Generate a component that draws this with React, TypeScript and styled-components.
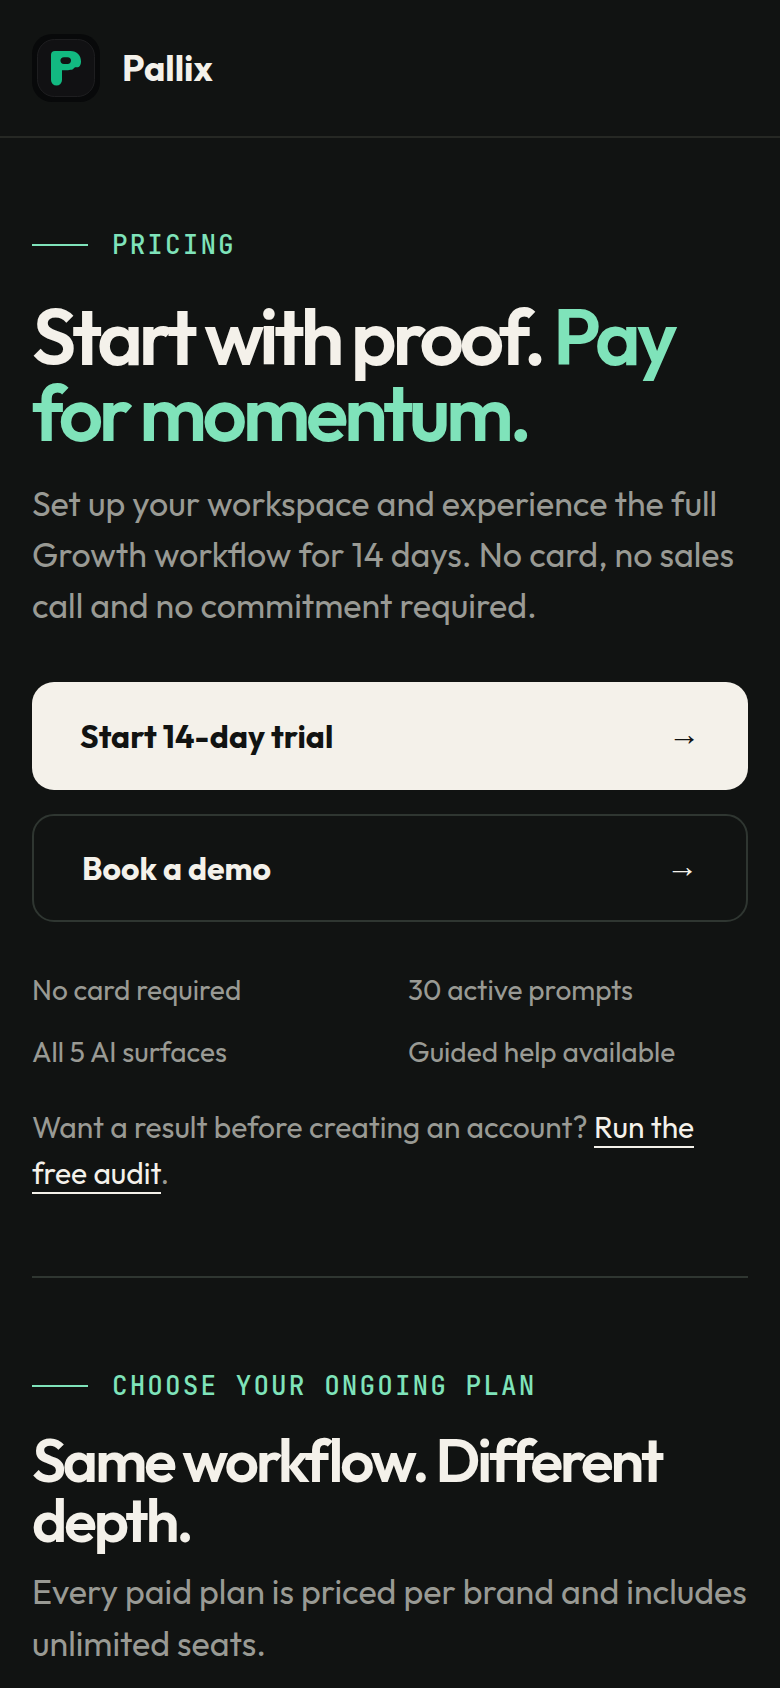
import React from 'react';
import styled, { createGlobalStyle, css } from 'styled-components';

const color = {
  page: '#111312',
  cream: '#f4f1ea',
  mint: '#7fe3ba',
  muted: '#999a94',
  line: '#2f3631',
  headerLine: '#262824',
};

const sans = `Outfit, Lato, "Liberation Sans", sans-serif`;
const mono = `"JetBrains Mono", "DejaVu Sans Mono", monospace`;

const GlobalStyle = createGlobalStyle`
  *, *::before, *::after { box-sizing: border-box; }
  body {
    margin: 0;
    background: ${color.page};
    color: ${color.cream};
    font-family: ${sans};
  }
  h1, h2, p, ul { margin: 0; padding: 0; }
  ul { list-style: none; }
`;

const Header = styled.header`
  display: flex;
  padding: 34px 32px;
  border-bottom: 2px solid ${color.headerLine};
`;

const Brand = styled.a`
  display: flex;
  align-items: center;
  gap: 22px;
  color: inherit;
  text-decoration: none;
  font-size: 36px;
  line-height: 46px;
  font-weight: 700;
`;

const Main = styled.main`
  padding: 0 32px;
`;

const Hero = styled.section`
  padding: 90px 0 80px;
  border-bottom: 2px solid ${color.line};
`;

const Plans = styled.section`
  padding: 91px 0 48px;
`;

const Eyebrow = styled.p`
  display: flex;
  align-items: center;
  gap: 24px;
  color: ${color.mint};
  font-family: ${mono};
  font-size: 26px;
  line-height: 34px;
  font-weight: 500;
  letter-spacing: 0.08em;
  text-transform: uppercase;

  &::before {
    content: '';
    width: 56px;
    height: 2px;
    background: currentColor;
  }
`;

const Title = styled.h1`
  margin-top: 36px;
  font-size: 78px;
  line-height: 76px;
  font-weight: 600;
  letter-spacing: -0.055em;
`;

const Accent = styled.span`
  color: ${color.mint};
`;

const Subtitle = styled.h2`
  margin-top: 27px;
  font-size: 60px;
  line-height: 60px;
  font-weight: 600;
  letter-spacing: -3px;
`;

const Lede = styled.p<{ $gap: number; $leading: number }>`
  margin-top: ${(p) => p.$gap}px;
  color: ${color.muted};
  font-size: 34px;
  line-height: ${(p) => p.$leading}px;
`;

const Actions = styled.div`
  display: grid;
  gap: 24px;
  margin-top: 51px;
`;

const Action = styled.a<{ $primary?: boolean }>`
  display: flex;
  align-items: center;
  justify-content: space-between;
  min-height: 108px;
  padding: 0 48px;
  border-radius: 22px;
  font-size: 32px;
  line-height: 40px;
  font-weight: 700;
  text-decoration: none;
  ${(p) =>
    p.$primary
      ? css`
          background: ${color.cream};
          color: ${color.page};
        `
      : css`
          border: 2px solid ${color.line};
          color: ${color.cream};
        `}
`;

const Arrow = styled.span`
  padding-bottom: 4px;
  font-family: "Liberation Sans", Arial, sans-serif;
`;

const Facts = styled.ul`
  display: grid;
  grid-template-columns: 1fr 1fr;
  gap: 26px 36px;
  margin-top: 50px;
  color: ${color.muted};
  font-size: 28px;
  line-height: 36px;
`;

const Note = styled.p`
  margin-top: 34px;
  color: ${color.muted};
  font-size: 30px;
  line-height: 46px;
`;

const NoteLink = styled.a`
  border-bottom: 2px solid ${color.cream};
  color: ${color.cream};
  text-decoration: none;
`;

const Logo = () => (
  <svg width="68" height="68" viewBox="0 0 68 68" aria-hidden="true">
    <rect width="68" height="68" rx="20" fill="#08090a" />
    <rect x="5.5" y="5.5" width="57" height="57" rx="17" fill="#111113" stroke="#1e1e20" />
    <path
      fill="#12b981"
      fillRule="evenodd"
      d="M23 17H38.5C45 17 49 21.5 49 27.5C49 31 47.5 33.3 45 33.3H43L40.5 35.5C39.5 36 37.5 35.6 36 36.2H30V46A5.5 5.5 0 0 1 19 46V21Q19 17 23 17ZM32 23.3C27.3 23.3 27.3 30 32 30H35.5C40.2 30 40.2 23.3 35.5 23.3Z"
    />
  </svg>
);

const facts = ['No card required', '30 active prompts', 'All 5 AI surfaces', 'Guided help available'];

export default function App() {
  return (
    <>
      <GlobalStyle />
      <Header>
        <Brand href="#">
          <Logo />
          Pallix
        </Brand>
      </Header>
      <Main>
        <Hero>
          <Eyebrow>Pricing</Eyebrow>
          <Title>
            Start with proof. <Accent>Pay for momentum.</Accent>
          </Title>
          <Lede $gap={28} $leading={51}>
            Set up your workspace and experience the full Growth workflow for 14 days. No card, no
            sales call and no commitment required.
          </Lede>
          <Actions>
            <Action href="#trial" $primary>
              Start 14-day trial <Arrow aria-hidden="true">→</Arrow>
            </Action>
            <Action href="#demo">
              Book a demo <Arrow aria-hidden="true">→</Arrow>
            </Action>
          </Actions>
          <Facts>
            {facts.map((fact) => (
              <li key={fact}>{fact}</li>
            ))}
          </Facts>
          <Note>
            Want a result before creating an account? <NoteLink href="#audit">Run the free audit</NoteLink>.
          </Note>
        </Hero>
        <Plans>
          <Eyebrow>Choose your ongoing plan</Eyebrow>
          <Subtitle>Same workflow. Different depth.</Subtitle>
          <Lede $gap={16} $leading={52}>
            Every paid plan is priced per brand and includes unlimited seats.
          </Lede>
        </Plans>
      </Main>
    </>
  );
}
